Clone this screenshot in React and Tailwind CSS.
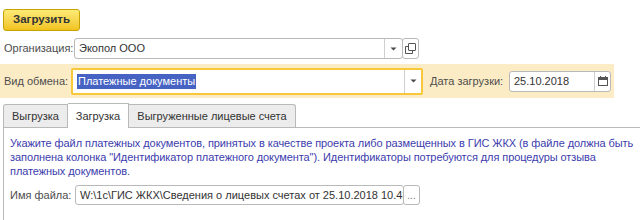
const Arrow = () => (
  <svg width="7" height="4" viewBox="0 0 7 4"><path d="M0.5 0.5h6L3.5 3.5z" fill="#4a4a4a" /></svg>
);

const OpenIcon = () => (
  <svg width="11" height="11" viewBox="0 0 11 11" fill="none" stroke="#555" strokeWidth="1">
    <rect x="3.5" y="0.5" width="7" height="7" rx="0.5" />
    <path d="M3.5 3.5h-3v7h7v-3" />
  </svg>
);

const CalIcon = () => (
  <svg width="10" height="10" viewBox="0 0 10 10">
    <rect x="0.5" y="1.5" width="9" height="8" fill="none" stroke="#555" />
    <rect x="0.5" y="1.5" width="9" height="2.5" fill="#555" />
    <rect x="2" y="0" width="1" height="2" fill="#555" />
    <rect x="7" y="0" width="1" height="2" fill="#555" />
  </svg>
);

export default function App() {
  return (
    <div className="w-[640px] h-[220px] overflow-hidden bg-white text-[11px] text-[#4d4d4d] font-['Liberation_Sans',Arial,sans-serif] whitespace-nowrap">
      <div className="pt-[9px] pl-[3px]">
        <button className="h-[22px] w-[77px] rounded-[3px] border border-[#c7a300] bg-linear-to-b from-[#fdeb74] to-[#f0c318] font-bold text-[#333] text-[11.5px] leading-none">
          Загрузить
        </button>
      </div>

      <div className="mt-[7px] flex items-center h-[21px] pl-[4px]">
        <span className="w-[70px] shrink-0">Организация:</span>
        <div className="w-[329px] h-[21px] shrink-0 flex border border-[#b9b9b9] rounded-[3px] bg-white">
          <div className="flex-1 flex items-center pl-[4px] text-[#333]">Экопол ООО</div>
          <div className="w-[18px] border-l border-[#cfcfcf] flex items-center justify-center"><Arrow /></div>
        </div>
        <div className="w-[17px] h-[21px] shrink-0 -ml-px border border-[#b9b9b9] rounded-[3px] flex items-center justify-center bg-white"><OpenIcon /></div>
      </div>

      <div className="mt-[5px] h-[34px] w-[614px] bg-[#fcecc6] flex items-center pl-[4px]">
        <span className="w-[67px] shrink-0">Вид обмена:</span>
        <div className="w-[352px] h-[27px] shrink-0 flex border-2 border-[#f7c83a] rounded-[2px] bg-white">
          <div className="flex-1 flex items-center pl-[4px]">
            <span className="bg-[#4663c4] text-white leading-[15px] px-px">Платежные документы</span>
          </div>
          <div className="w-[17px] border-l border-[#cfcfcf] flex items-center justify-center"><Arrow /></div>
        </div>
        <span className="ml-[7px] w-[79px] shrink-0">Дата загрузки:</span>
        <div className="w-[102px] h-[21px] shrink-0 flex border border-[#b9b9b9] rounded-[3px] bg-white">
          <div className="flex-1 flex items-center pl-[4px] text-[#333]">25.10.2018</div>
          <div className="w-[16px] border-l border-[#cfcfcf] flex items-center justify-center"><CalIcon /></div>
        </div>
      </div>

      <div className="mt-[5px] pl-[3px]">
        <div className="flex items-end h-[24px]">
          <div className="w-[65px] h-[23px] bg-[#ececec] border border-b-0 border-[#b9b9b9] rounded-tl-[3px] flex items-center justify-center text-[#333]">Выгрузка</div>
          <div className="w-[61px] h-[25px] -mb-px relative bg-white border border-b-0 border-l-0 border-[#b9b9b9] flex items-center justify-center text-[#333]">Загрузка</div>
          <div className="w-[167px] h-[23px] bg-[#ececec] border border-b-0 border-l-0 border-[#b9b9b9] rounded-tr-[3px] flex items-center justify-center text-[#333]">Выгруженные лицевые счета</div>
        </div>
        <div className="border-l border-t border-[#b9b9b9] h-[100px] pt-[8px] pl-[6px]">
          <div className="text-[#3c3cad] leading-[14px] tracking-[-0.08px]">
            Укажите файл платежных документов, принятых в качестве проекта либо размещенных в ГИС ЖКХ (в файле должна быть<br />
            заполнена колонка "Идентификатор платежного документа"). Идентификаторы потребуются для процедуры отзыва<br />
            платежных документов.
          </div>
          <div className="mt-[7px] flex items-center h-[20px]">
            <span className="w-[65px] shrink-0">Имя файла:</span>
            <div className="w-[329px] h-[20px] shrink-0 flex items-center border border-[#b9b9b9] rounded-[3px] bg-white pl-[4px] text-[#333] overflow-hidden">
              W:\1c\ГИС ЖКХ\Сведения о лицевых счетах от 25.10.2018 10.43
            </div>
            <div className="w-[17px] h-[20px] shrink-0 -ml-px border border-[#b9b9b9] rounded-[3px] flex items-center justify-center bg-white text-[#777] text-[10px]">...</div>
          </div>
        </div>
      </div>
    </div>
  );
}
